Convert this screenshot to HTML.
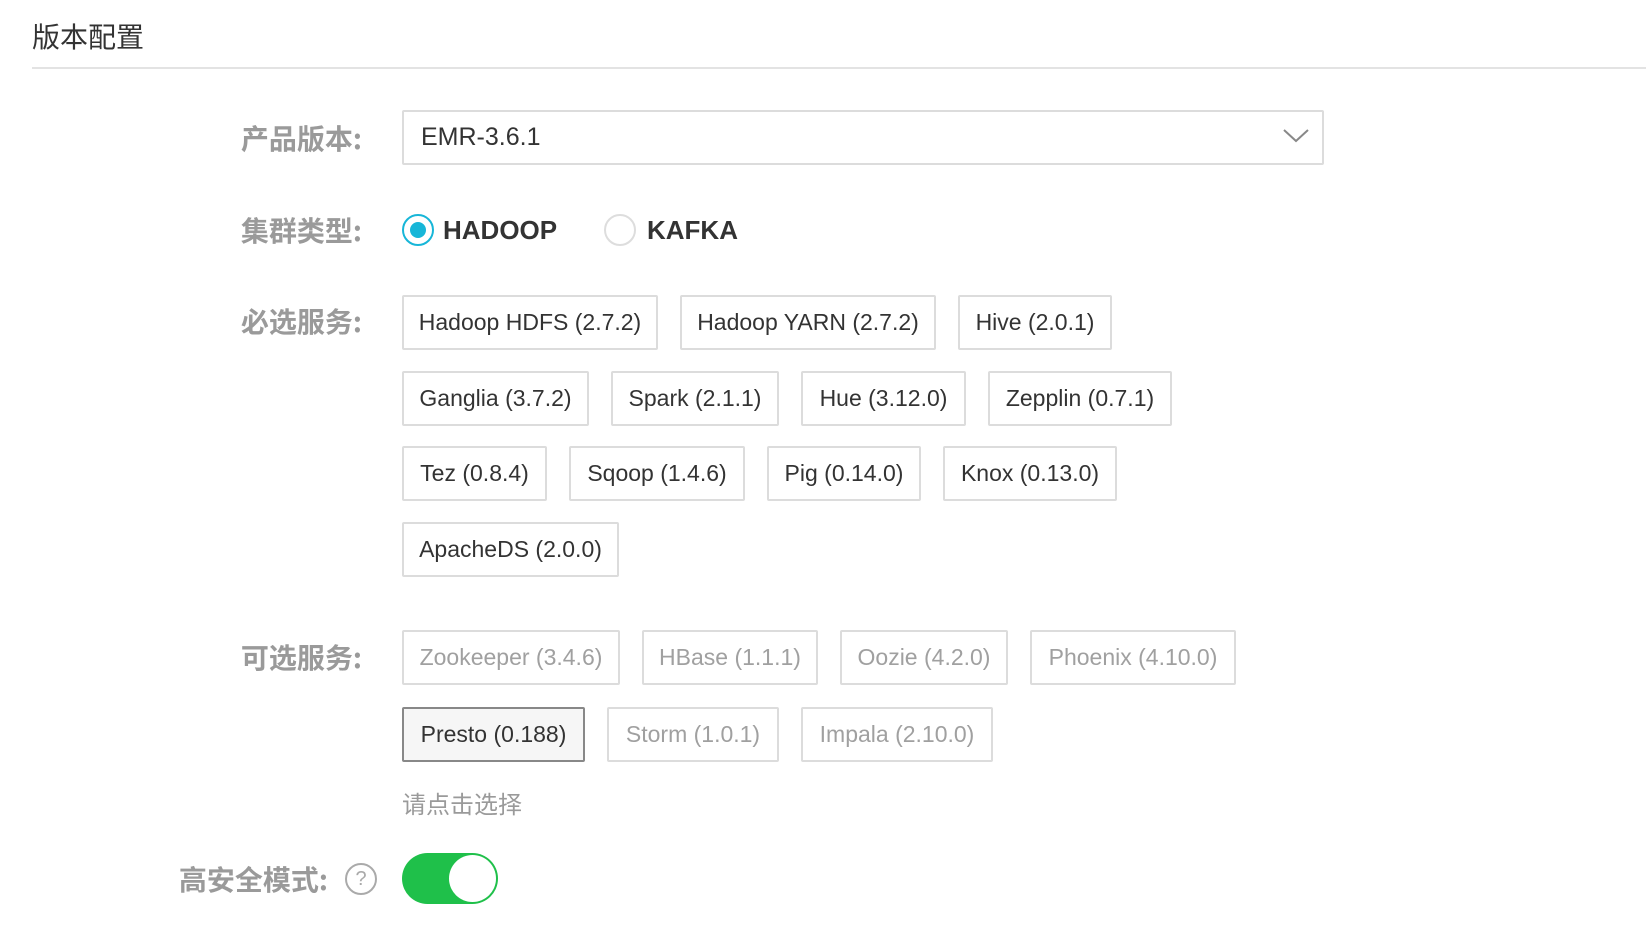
<!DOCTYPE html>
<html><head><meta charset="utf-8"><style>
*{margin:0;padding:0;box-sizing:border-box}
body{width:1646px;height:932px;background:#fff;font-family:"Liberation Sans","Noto Sans CJK SC",sans-serif;position:relative;overflow:hidden;color:#333}
.abs{position:absolute}
h1{position:absolute;left:32px;top:19px;font-size:28px;font-weight:normal;color:#333;font-family:"Noto Sans CJK SC",sans-serif;line-height:34px}
.line{position:absolute;left:32px;right:0;top:67px;height:2px;background:#e3e3e3}
.lbl{position:absolute;right:1284px;font-size:28px;font-weight:bold;color:#9a9a9a;font-family:"Noto Sans CJK SC",sans-serif;line-height:32px;white-space:nowrap}
.sel{left:402px;top:110px;width:922px;height:55px;border:2px solid #dcdcdc;border-radius:2px;font-size:25px;line-height:51px;padding-left:17px;color:#333}
.row{position:absolute;left:402px;display:flex;gap:22px}
.tag{height:55px;border:2px solid #dcdcdc;border-radius:2px;font-size:23px;line-height:51px;text-align:center;color:#333;white-space:nowrap}
.dis{color:#a0a0a0}
.radio{position:absolute;width:32px;height:32px;border-radius:50%;border:2px solid #ddd;top:214px}
.rt{position:absolute;top:213px;font-size:26px;font-weight:bold;color:#333;line-height:34px}
</style></head><body>
<h1>版本配置</h1>
<div class="line"></div>

<div class="lbl" style="top:122px">产品版本:</div>
<div class="abs sel">EMR-3.6.1
<svg class="abs" style="right:12px;top:15px" width="28" height="18" viewBox="0 0 28 18"><path d="M2 3 L14 14 L26 3" fill="none" stroke="#888" stroke-width="2"/></svg></div>

<div class="lbl" style="top:214px">集群类型:</div>
<div class="radio" style="left:402px;border-color:#17b6d8"><div class="abs" style="left:6px;top:6px;width:16px;height:16px;border-radius:50%;background:#17b6d8"></div></div>
<div class="rt" style="left:443px">HADOOP</div>
<div class="radio" style="left:604px"></div>
<div class="rt" style="left:647px">KAFKA</div>

<div class="lbl" style="top:305px">必选服务:</div>
<div class="row" style="top:295px"><div class="tag" style="width:256px">Hadoop HDFS (2.7.2)</div><div class="tag" style="width:256px">Hadoop YARN (2.7.2)</div><div class="tag" style="width:154px">Hive (2.0.1)</div></div>
<div class="row" style="top:371px"><div class="tag" style="width:187px">Ganglia (3.7.2)</div><div class="tag" style="width:168px">Spark (2.1.1)</div><div class="tag" style="width:165px">Hue (3.12.0)</div><div class="tag" style="width:184px">Zepplin (0.7.1)</div></div>
<div class="row" style="top:446px"><div class="tag" style="width:145px">Tez (0.8.4)</div><div class="tag" style="width:176px">Sqoop (1.4.6)</div><div class="tag" style="width:154px">Pig (0.14.0)</div><div class="tag" style="width:174px">Knox (0.13.0)</div></div>
<div class="row" style="top:522px"><div class="tag" style="width:217px">ApacheDS (2.0.0)</div></div>

<div class="lbl" style="top:641px">可选服务:</div>
<div class="row" style="top:630px"><div class="tag dis" style="width:218px">Zookeeper (3.4.6)</div><div class="tag dis" style="width:176px">HBase (1.1.1)</div><div class="tag dis" style="width:168px">Oozie (4.2.0)</div><div class="tag dis" style="width:206px">Phoenix (4.10.0)</div></div>
<div class="row" style="top:707px"><div class="tag" style="width:183px;border-color:#888;background:#f6f6f6">Presto (0.188)</div><div class="tag dis" style="width:172px">Storm (1.0.1)</div><div class="tag dis" style="width:192px">Impala (2.10.0)</div></div>

<div class="abs" style="left:402px;top:787px;font-size:24px;color:#9a9a9a;font-family:'Noto Sans CJK SC',sans-serif;line-height:32px">请点击选择</div>

<div class="lbl" style="top:863px;right:1318px">高安全模式:</div>
<div class="abs" style="left:345px;top:863px;width:32px;height:32px;border:2px solid #aaa;border-radius:50%;color:#aaa;font-size:20px;text-align:center;line-height:28px">?</div>
<div class="abs" style="left:402px;top:853px;width:96px;height:51px;border-radius:26px;background:#1fc04a"><div class="abs" style="right:2px;top:2px;width:47px;height:47px;border-radius:50%;background:#fff"></div></div>
</body></html>
